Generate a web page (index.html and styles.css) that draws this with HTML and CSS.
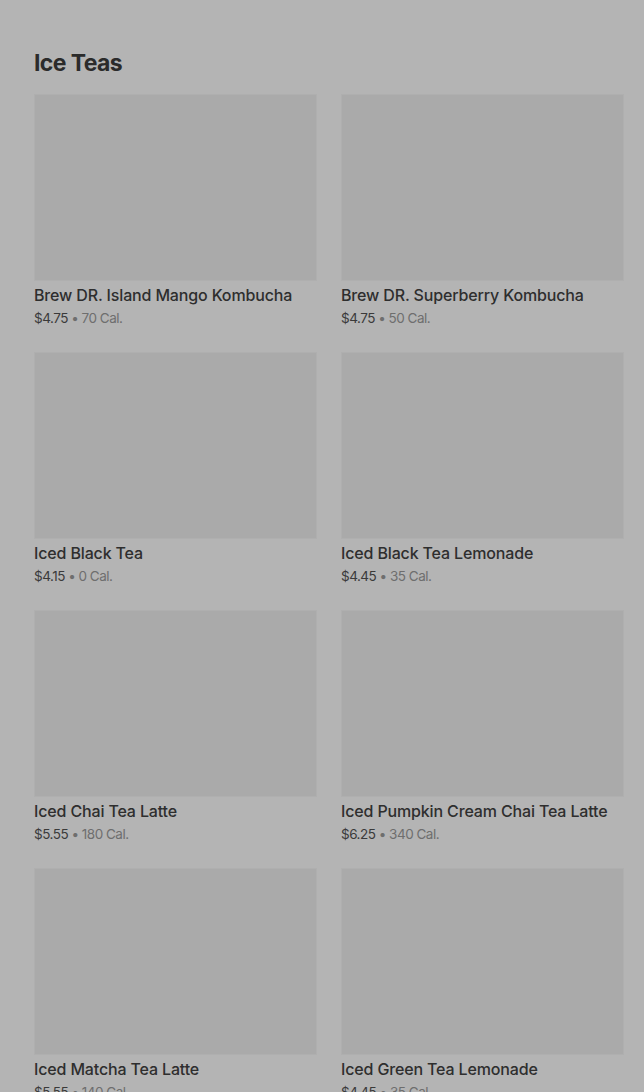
FILE: index.html
```html
<!DOCTYPE html>
<html>
<head>
<meta name="viewport" content="width=device-width, initial-scale=1.0">
  <title>Ice Teas</title>
  <link rel="stylesheet" href="styles.css">
</head>
<body>
  <div class="menu-section">
    <h2 class="section-title">Ice Teas</h2>
    <div class="item-grid">
      <div class="item-card">
        <div class="item-image"></div>
        <div class="item-name">Brew DR. Island Mango Kombucha</div>
        <div class="item-meta"><span class="price">$4.75</span> <span class="cal">• 70 Cal.</span></div>
      </div>
      <div class="item-card">
        <div class="item-image"></div>
        <div class="item-name">Brew DR. Superberry Kombucha</div>
        <div class="item-meta"><span class="price">$4.75</span> <span class="cal">• 50 Cal.</span></div>
      </div>
      <div class="item-card">
        <div class="item-image"></div>
        <div class="item-name">Iced Black Tea</div>
        <div class="item-meta"><span class="price">$4.15</span> <span class="cal">• 0 Cal.</span></div>
      </div>
      <div class="item-card">
        <div class="item-image"></div>
        <div class="item-name">Iced Black Tea Lemonade</div>
        <div class="item-meta"><span class="price">$4.45</span> <span class="cal">• 35 Cal.</span></div>
      </div>
      <div class="item-card">
        <div class="item-image"></div>
        <div class="item-name">Iced Chai Tea Latte</div>
        <div class="item-meta"><span class="price">$5.55</span> <span class="cal">• 180 Cal.</span></div>
      </div>
      <div class="item-card">
        <div class="item-image"></div>
        <div class="item-name">Iced Pumpkin Cream Chai Tea Latte</div>
        <div class="item-meta"><span class="price">$6.25</span> <span class="cal">• 340 Cal.</span></div>
      </div>
      <div class="item-card">
        <div class="item-image"></div>
        <div class="item-name">Iced Matcha Tea Latte</div>
        <div class="item-meta"><span class="price">$5.55</span> <span class="cal">• 140 Cal.</span></div>
      </div>
      <div class="item-card">
        <div class="item-image"></div>
        <div class="item-name">Iced Green Tea Lemonade</div>
        <div class="item-meta"><span class="price">$4.45</span> <span class="cal">• 35 Cal.</span></div>
      </div>
    </div>
  </div>
</body>
</html>
```

FILE: styles.css
```css
body {
  margin: 0;
  font-family: Inter, "Noto Sans", sans-serif;
  background-color: #b4b4b4;
  overflow: hidden;
}

.menu-section {
  padding: 47px 20px 0 34px;
}

.section-title {
  margin: 0 0 15px;
  font-size: 23px;
  line-height: 32px;
  font-weight: 700;
  color: #2b2b2b;
  letter-spacing: -0.6px;
}

.item-grid {
  display: grid;
  grid-template-columns: 283px 283px;
  column-gap: 24px;
  row-gap: 23px;
}

.item-image {
  height: 185px;
  background-color: #aaaaaa;
  border: 1px solid #afafaf;
}

.item-name {
  margin-top: 3px;
  font-size: 16px;
  line-height: 22px;
  font-weight: 500;
  color: #2e2e2e;
  letter-spacing: -0.15px;
  white-space: nowrap;
}

.item-meta {
  margin-top: 1px;
  font-size: 13.5px;
  line-height: 22px;
  letter-spacing: -0.5px;
}

.price {
  color: #3a3a3a;
}

/* calories text is lighter */
.cal {
  color: #6e6e6e;
}
```
